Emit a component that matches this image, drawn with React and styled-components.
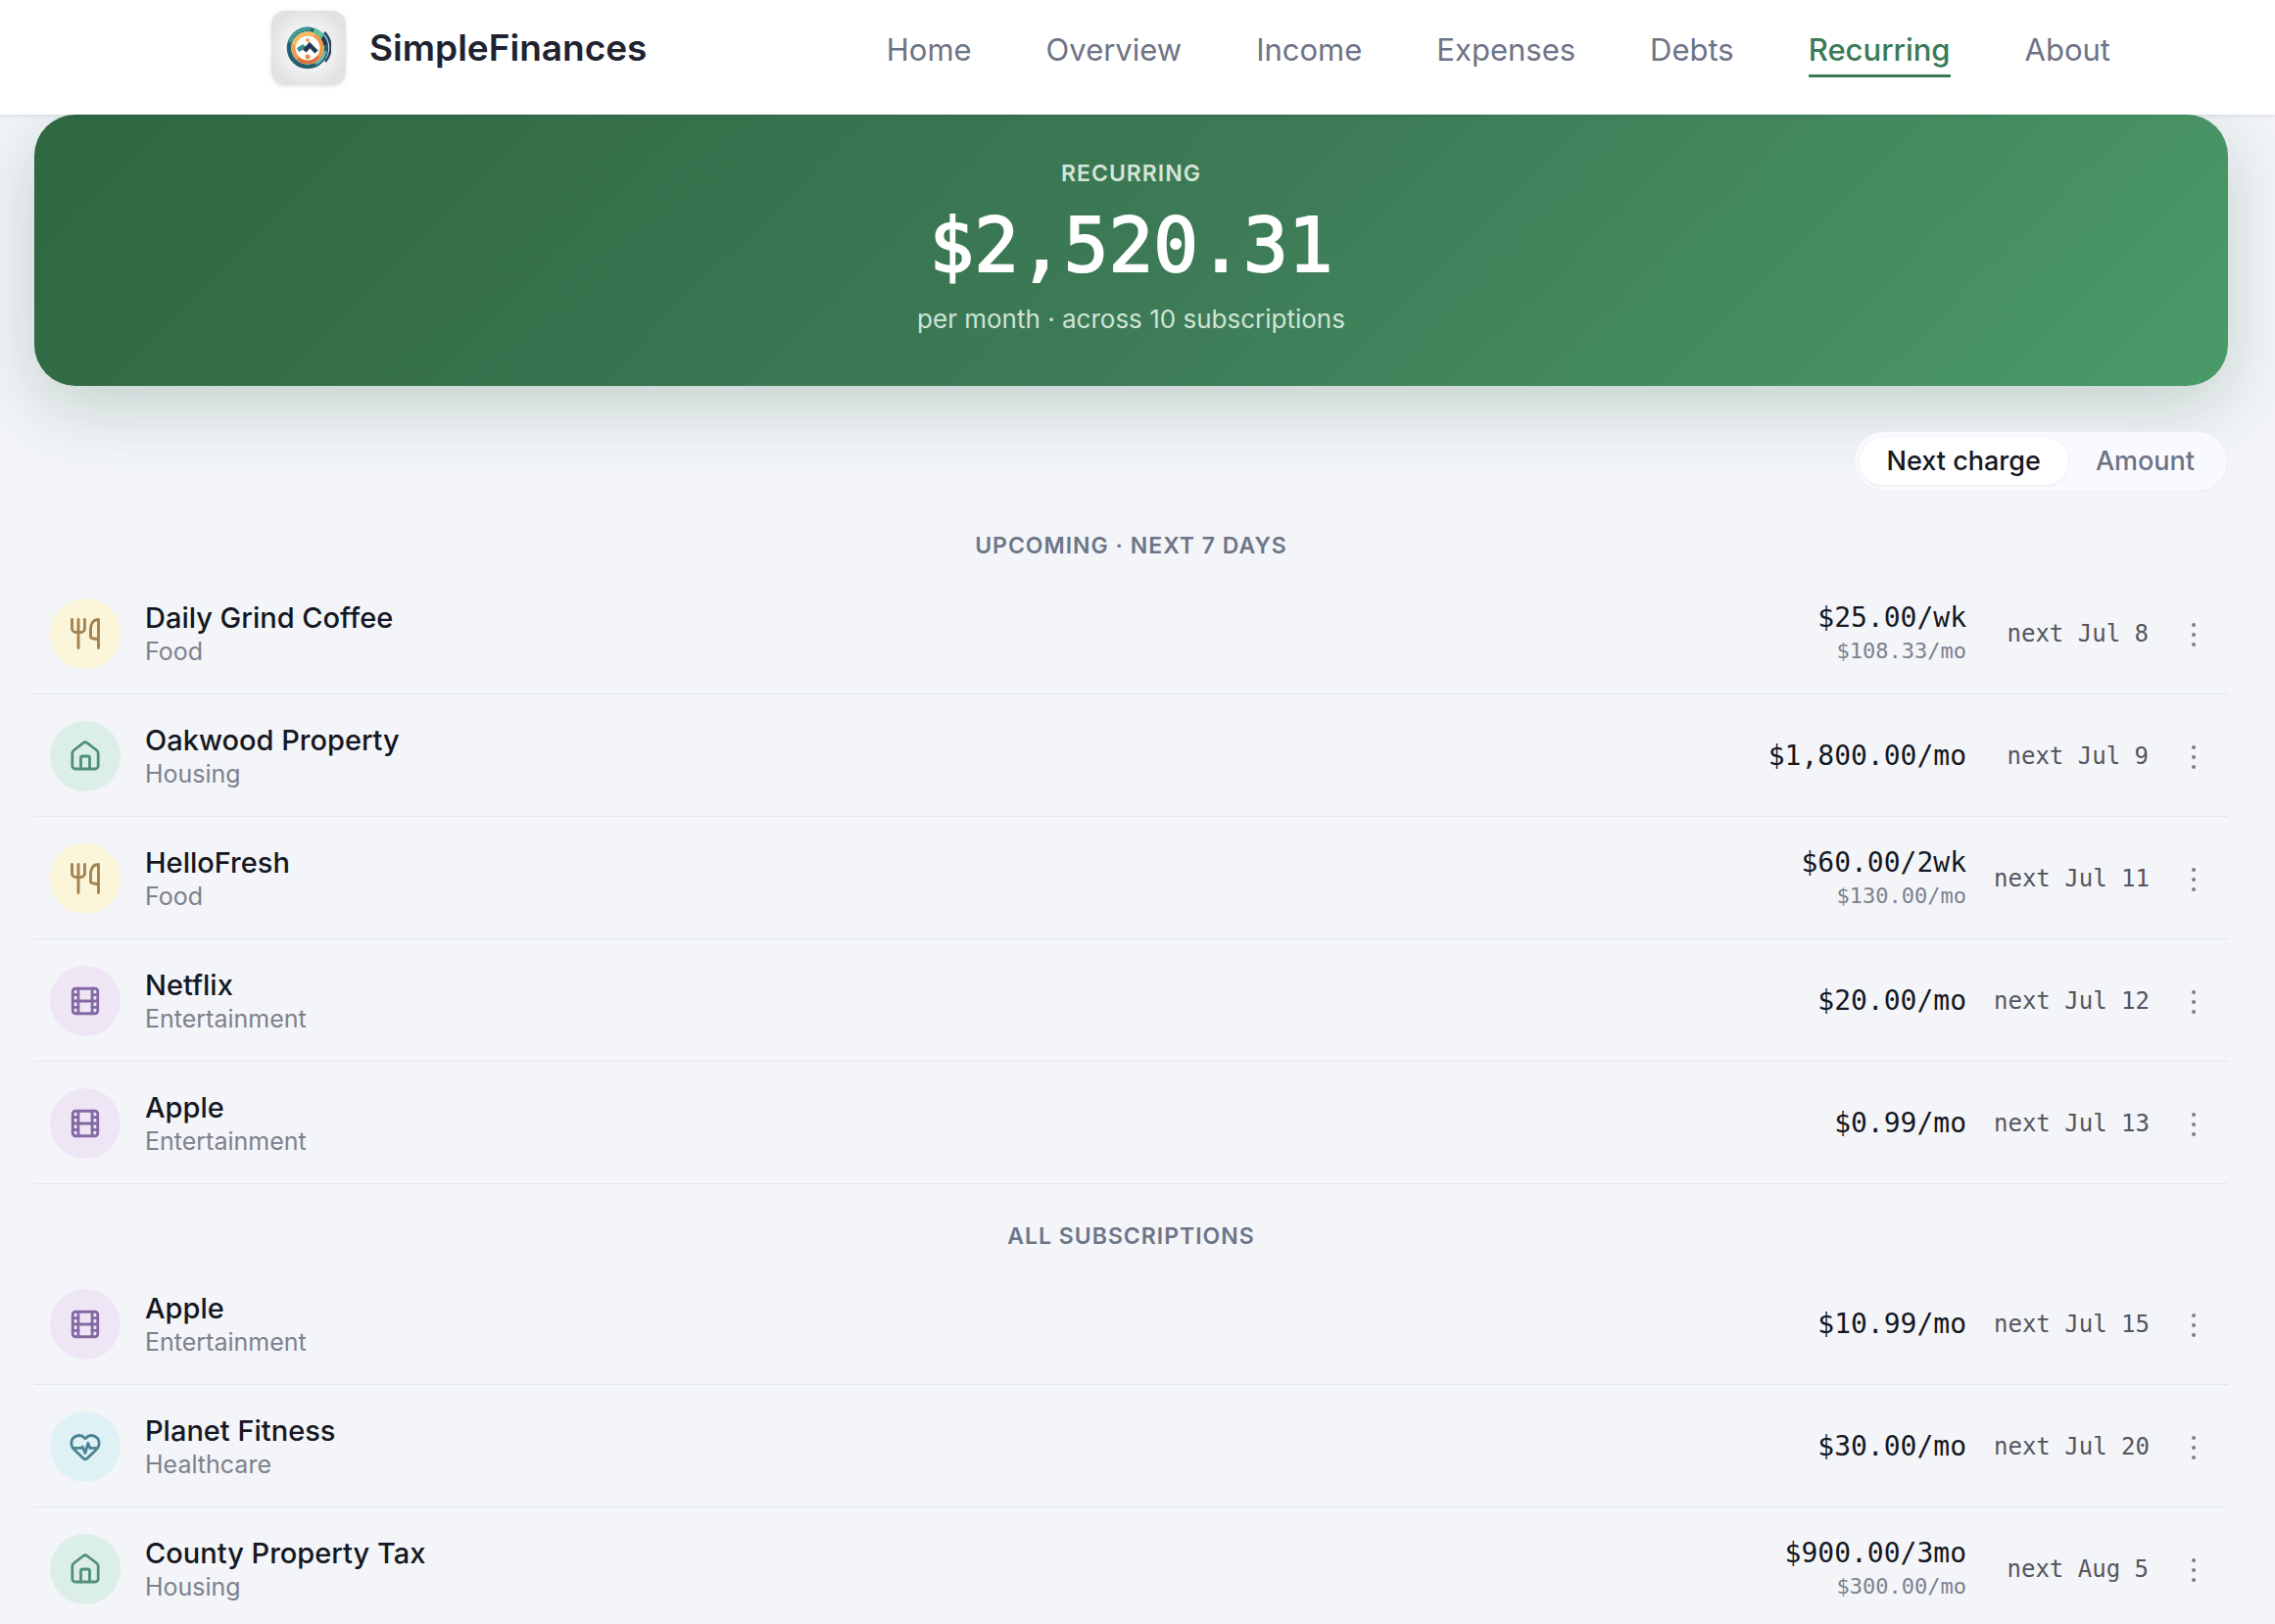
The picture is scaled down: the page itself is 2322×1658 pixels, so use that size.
import React, { useState } from "react";
import styled, { createGlobalStyle } from "styled-components";
import { Film, HeartPulse } from "lucide-react";

const sans = `Inter, "Open Sans", sans-serif`;
const mono = `"DejaVu Sans Mono", "Liberation Mono", monospace`;

const GlobalStyle = createGlobalStyle`
  * { box-sizing: border-box; }
  html { overflow: hidden; }
  body {
    margin: 0;
    background: #f3f5f9;
    color: #151722;
    font-family: ${sans};
    -webkit-font-smoothing: antialiased;
  }
  button { font-family: inherit; border: 0; background: none; padding: 0; cursor: pointer; }
`;

const Header = styled.header`
  position: relative;
  z-index: 1;
  display: flex;
  align-items: center;
  justify-content: space-between;
  padding: 11px 168px 30px 277px;
  background: #fff;
  box-shadow: 0 1px 4px rgba(20, 30, 40, 0.12);
`;

const Brand = styled.a`
  display: flex;
  align-items: center;
  gap: 24px;
  color: #20232f;
  font-size: 37px;
  font-weight: 600;
  line-height: 76px;
  text-decoration: none;
`;

const BrandTile = styled.span`
  display: grid;
  place-items: center;
  width: 76px;
  height: 76px;
  border-radius: 14px;
  background: radial-gradient(circle, #f4f4f6 35%, #e2e2e3 75%);
  box-shadow: 0 1px 4px rgba(0, 0, 0, 0.12);
`;

const Nav = styled.nav`
  display: flex;
  gap: 76px;
  margin-top: 8px;
`;

const NavLink = styled.a`
  padding: 4px 0 5px;
  border-bottom: 3px solid ${(p) => (p.$active ? "#3a7a57" : "transparent")};
  color: ${(p) => (p.$active ? "#3a7a57" : "#6d7386")};
  font-size: 31px;
  font-weight: ${(p) => (p.$active ? 500 : 400)};
  line-height: 40px;
  text-decoration: none;
`;

const Main = styled.main`
  padding: 0 48px 0 35px;
`;

const Hero = styled.section`
  display: flex;
  flex-direction: column;
  align-items: center;
  padding: 44px 32px 52px;
  border-radius: 42px;
  background: linear-gradient(135deg, #2f6741 0%, #3d7c57 55%, #4b9a69 100%);
  box-shadow: 0 20px 72px rgba(45, 100, 70, 0.26);
  color: #fff;
`;

const HeroLabel = styled.h1`
  margin: 0;
  color: #d5e5da;
  font-size: 23px;
  font-weight: 600;
  letter-spacing: 1px;
  line-height: 32px;
  text-transform: uppercase;
`;

const HeroAmount = styled.p`
  margin: 10px 0 11px;
  font-family: ${mono};
  font-size: 76px;
  line-height: 96px;
  -webkit-text-stroke: 2px #fff;
`;

const HeroNote = styled.p`
  margin: 0;
  color: #d0e3d6;
  font-size: 26px;
  line-height: 32px;
`;

const Toolbar = styled.div`
  display: flex;
  justify-content: flex-end;
  padding: 46px 0 2px;
`;

const Segmented = styled.div`
  display: flex;
  padding: 6px 5px;
  border: 1px solid #eceff3;
  border-radius: 32px;
  background: #f9fafe;
`;

const Segment = styled.button`
  && {
    padding: 0 28px;
    border-radius: 24px;
    background: ${(p) => (p.$active ? "#fff" : "transparent")};
    box-shadow: ${(p) => (p.$active ? "0 1px 4px rgba(20, 30, 40, 0.06)" : "none")};
    color: ${(p) => (p.$active ? "#151722" : "#6d7386")};
    font-size: 27px;
    font-weight: 500;
    line-height: 48px;
  }
`;

const SectionTitle = styled.h2`
  margin: 37px 0 11px;
  color: #6d7588;
  font-size: 23px;
  font-weight: 600;
  letter-spacing: 1px;
  line-height: 32px;
  text-align: center;
  text-transform: uppercase;
`;

const List = styled.ul`
  margin: 0;
  padding: 0;
  list-style: none;
`;

const Row = styled.li`
  display: flex;
  align-items: center;
  gap: 28px;
  padding: 27px 17px 25px 16px;
  border-bottom: 1px solid #e2e7eb;
`;

const Who = styled.div`
  display: flex;
  flex: 1;
  align-items: center;
  gap: 25px;
`;

const Badge = styled.span`
  display: grid;
  place-items: center;
  width: 72px;
  height: 72px;
  border-radius: 50%;
  background: ${(p) => p.$bg};
  color: ${(p) => p.$fg};
`;

const Name = styled.div`
  font-size: 29px;
  font-weight: 500;
  line-height: 36px;
`;

const Category = styled.div`
  color: #7d818d;
  font-size: 25px;
  line-height: 32px;
`;

const Price = styled.div`
  font-family: ${mono};
  font-size: 28px;
  line-height: 36px;
  text-align: right;
`;

const Monthly = styled.div`
  color: #7d818d;
  font-size: 22px;
  line-height: 32px;
`;

const NextDate = styled.div`
  width: 158px;
  color: #54565f;
  font-family: ${mono};
  font-size: 24px;
  line-height: 36px;
  text-align: right;
  white-space: nowrap;
`;

const MenuButton = styled.button`
  display: grid;
  place-items: center;
  width: 36px;
  height: 48px;
  color: #7b7e88;
`;

const LogoMark = () => (
  <svg width="46" height="46" viewBox="0 0 46 46" fill="none" aria-hidden="true">
    <circle cx="22" cy="23" r="19" stroke="#22616d" strokeWidth="4.5" />
    <path d="M4 17A19 19 0 0 1 25 3.500" stroke="#3f9c98" strokeWidth="4" />
    <path d="M28 5.500a19 19 0 0 1 9 6" stroke="#5cc0a0" strokeWidth="6" />
    <path d="M39 7a22 22 0 0 1 1 30" stroke="#27435c" strokeWidth="2.500" />
    <path d="M37 13a19 19 0 0 1 3 7" stroke="#22384f" strokeWidth="4" />
    <path d="M40 26a18 18 0 0 1-10 13" stroke="#62b8b4" strokeWidth="3" />
    <circle cx="22" cy="23" r="14.500" fill="#fff" stroke="#ee9a4d" strokeWidth="4" />
    <path d="M8 20a14.500 14.500 0 0 1 21-10" stroke="#f4bb62" strokeWidth="4" />
    <path d="M12 34a14.500 14.500 0 0 0 21-2" stroke="#dd6f45" strokeWidth="3" />
    <path d="M12 25l5-3 4 3" stroke="#3c8b8d" strokeWidth="4.500" />
    <path d="M19 26l5-6 7 7" stroke="#233a54" strokeWidth="4.500" />
    <circle cx="22" cy="15" r="2" fill="#f0a050" />
    <circle cx="22" cy="32" r="2.500" fill="#ee8a48" />
  </svg>
);

const ForkKnife = () => (
  <svg width="32" height="32" viewBox="0 0 32 32" fill="none" stroke="currentColor" strokeWidth="2.9" strokeLinecap="round" strokeLinejoin="round" aria-hidden="true">
    <path d="M2.500 1.500v9a4 4 0 0 0 4 4h5a4 4 0 0 0 4-4v-9M9 1.500v29" />
    <path d="M29.500 30.500v-29c-5 0-8 4-8 10v7c0 1.500 1 2 2 2.200l6 1" />
  </svg>
);

const HouseIcon = () => (
  <svg width="32" height="32" viewBox="0 0 32 32" fill="none" stroke="currentColor" strokeWidth="2.800" strokeLinecap="round" strokeLinejoin="round" aria-hidden="true">
    <path d="M2.800 13a4 4 0 0 1 1.500-3L14 2.500a3.300 3.300 0 0 1 4 0L27.700 10a4 4 0 0 1 1.500 3v13a3 3 0 0 1-3 3H5.800a3 3 0 0 1-3-3z" />
    <path d="M11.500 29V18a2 2 0 0 1 2-2h5a2 2 0 0 1 2 2v11" />
  </svg>
);

const Dots = () => (
  <svg width="6" height="26" viewBox="0 0 6 26" fill="currentColor" aria-hidden="true">
    <circle cx="3" cy="4" r="2" />
    <circle cx="3" cy="14" r="2" />
    <circle cx="3" cy="24" r="2" />
  </svg>
);

const categories = {
  Food: { bg: "#fbf5da", fg: "#a5824f", icon: <ForkKnife /> },
  Housing: { bg: "#dceee8", fg: "#4f8f7b", icon: <HouseIcon /> },
  Entertainment: { bg: "#efe6f5", fg: "#8468a3", icon: <Film size={34} /> },
  Healthcare: { bg: "#def1f5", fg: "#4d8296", icon: <HeartPulse size={34} /> },
};

const upcoming = [
  { name: "Daily Grind Coffee", category: "Food", price: "$25.00/wk", monthly: "$108.33/mo", next: "Jul 8" },
  { name: "Oakwood Property", category: "Housing", price: "$1,800.00/mo", next: "Jul 9" },
  { name: "HelloFresh", category: "Food", price: "$60.00/2wk", monthly: "$130.00/mo", next: "Jul 11" },
  { name: "Netflix", category: "Entertainment", price: "$20.00/mo", next: "Jul 12" },
  { name: "Apple", category: "Entertainment", price: "$0.99/mo", next: "Jul 13" },
];

const all = [
  { name: "Apple", category: "Entertainment", price: "$10.99/mo", next: "Jul 15" },
  { name: "Planet Fitness", category: "Healthcare", price: "$30.00/mo", next: "Jul 20" },
  { name: "County Property Tax", category: "Housing", price: "$900.00/3mo", monthly: "$300.00/mo", next: "Aug 5" },
];

const links = ["Home", "Overview", "Income", "Expenses", "Debts", "Recurring", "About"];

function Subscriptions({ items }) {
  return (
    <List>
      {items.map((s) => {
        const c = categories[s.category];
        return (
          <Row key={s.name}>
            <Who>
              <Badge $bg={c.bg} $fg={c.fg}>{c.icon}</Badge>
              <div>
                <Name>{s.name}</Name>
                <Category>{s.category}</Category>
              </div>
            </Who>
            <Price>
              {s.price}
              {s.monthly && <Monthly>{s.monthly}</Monthly>}
            </Price>
            <NextDate>next {s.next}</NextDate>
            <MenuButton aria-label={`Options for ${s.name}`}><Dots /></MenuButton>
          </Row>
        );
      })}
    </List>
  );
}

export default function App() {
  const [sort, setSort] = useState("Next charge");
  return (
    <>
      <GlobalStyle />
      <Header>
        <Brand href="#home">
          <BrandTile><LogoMark /></BrandTile>
          SimpleFinances
        </Brand>
        <Nav>
          {links.map((l) => (
            <NavLink key={l} href={`#${l.toLowerCase()}`} $active={l === "Recurring"}>{l}</NavLink>
          ))}
        </Nav>
      </Header>
      <Main>
        <Hero>
          <HeroLabel>Recurring</HeroLabel>
          <HeroAmount>$2,520.31</HeroAmount>
          <HeroNote>per month · across 10 subscriptions</HeroNote>
        </Hero>
        <Toolbar>
          <Segmented>
            {["Next charge", "Amount"].map((s) => (
              <Segment key={s} type="button" $active={s === sort} aria-pressed={s === sort} onClick={() => setSort(s)}>{s}</Segment>
            ))}
          </Segmented>
        </Toolbar>
        <SectionTitle>Upcoming · Next 7 days</SectionTitle>
        <Subscriptions items={upcoming} />
        <SectionTitle>All subscriptions</SectionTitle>
        <Subscriptions items={all} />
      </Main>
    </>
  );
}
